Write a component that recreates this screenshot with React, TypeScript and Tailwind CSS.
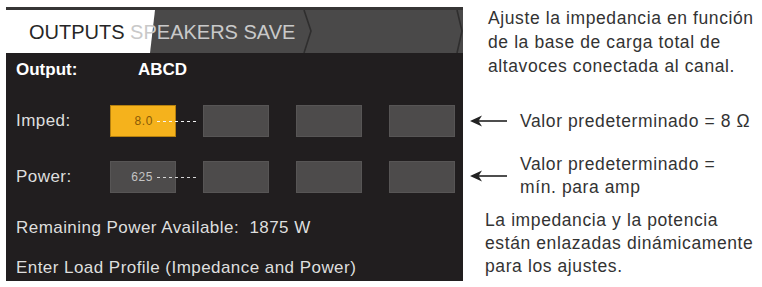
import React from "react";

function Arrow() {
  return (
    <svg width="38" height="14" viewBox="0 0 38 14" className="shrink-0">
      <line x1="6" y1="7" x2="37" y2="7" stroke="#222" strokeWidth="1.6" />
      <path d="M0 7 L12 1.5 L8.5 7 L12 12.5 Z" fill="#222" />
    </svg>
  );
}

function Box({ value, active }: { value?: string; active?: boolean }) {
  return (
    <div
      className={
        active
          ? "relative w-[66px] h-[32px] bg-[#f5b21c] border border-[#b5800f] flex items-center justify-end pr-[22px]"
          : "relative w-[66px] h-[32px] bg-[#4d4b4b] border border-[#575555] flex items-center justify-end pr-[22px]"
      }
    >
      {value && (
        <>
          <span
            className={
              active
                ? "text-[12px] tracking-[0.6px] text-[#8a5a06] leading-none"
                : "text-[12px] tracking-[0.6px] text-[#c4c4c4] leading-none"
            }
          >
            {value}
          </span>
          <span
            className={
              active
                ? "absolute left-[46px] top-[15px] w-[41px] h-px bg-[repeating-linear-gradient(90deg,#f4f4f4_0px,#f4f4f4_3px,transparent_3px,transparent_6px)]"
                : "absolute left-[46px] top-[15px] w-[42px] h-px bg-[repeating-linear-gradient(90deg,#d6d6d6_0px,#d6d6d6_3px,transparent_3px,transparent_6px)]"
            }
          />
        </>
      )}
    </div>
  );
}

export default function App() {
  return (
    <div className="w-[762px] h-[287px] bg-white flex overflow-hidden font-['Liberation_Sans',Arial,sans-serif]">
      <div className="ml-[6px] mt-[7px] w-[457px] h-[274px] flex flex-col shrink-0">
        <div className="relative h-[46px] bg-[#4a4949] border-t-[3px] border-[#363535] flex items-center overflow-hidden">
          <div className="absolute left-0 top-0 h-full w-[150px] bg-white [clip-path:polygon(0_0,149px_0,144px_100%,0_100%)]" />
          <svg className="absolute left-0 top-0" width="457" height="43">
            <polyline points="298,0 305,21 298,43" fill="none" stroke="#2f2e2e" strokeWidth="1.6" />
            <polyline points="451,0 456,21 451,43" fill="none" stroke="#2f2e2e" strokeWidth="1.6" />
          </svg>
          <div className="relative pl-[23px] text-[20px] leading-none whitespace-nowrap">
            <span className="text-[#262626]">OUTPUTS</span>
            <span className="text-[#c9c9c9]"> SPEAKERS SAVE</span>
          </div>
        </div>
        <div className="flex-1 bg-[#211e1f] pl-[10px] flex flex-col text-[17px] tracking-[0.45px] text-[#dedede]">
          <div className="h-[34px] flex items-center font-bold text-white tracking-normal">
            <span className="w-[122px]">Output:</span>
            <span>ABCD</span>
          </div>
          <div className="mt-[18px] h-[32px] flex items-center">
            <span className="w-[94px]">Imped:</span>
            <div className="flex gap-[27px]">
              <Box value="8.0" active />
              <Box />
              <Box />
              <Box />
            </div>
          </div>
          <div className="mt-[24px] h-[32px] flex items-center">
            <span className="w-[94px]">Power:</span>
            <div className="flex gap-[27px]">
              <Box value="625" />
              <Box />
              <Box />
              <Box />
            </div>
          </div>
          <div className="mt-[23px] h-[24px] flex items-center whitespace-pre">
            Remaining Power Available:  1875 W
          </div>
          <div className="mt-[16px] h-[24px] flex items-center whitespace-nowrap">
            Enter Load Profile (Impedance and Power)
          </div>
        </div>
      </div>
      <div className="ml-[7px] flex-1 flex flex-col text-[17.5px] tracking-[0.6px] text-[#333333] leading-[24px] whitespace-nowrap">
        <div className="mt-[6px] pl-[18px]">
          <div>Ajuste la impedancia en función</div>
          <div>de la base de carga total de</div>
          <div>altavoces conectada al canal.</div>
        </div>
        <div className="mt-[31px] h-[24px] flex items-center gap-[12px]">
          <Arrow />
          <span>Valor predeterminado = 8 Ω</span>
        </div>
        <div className="mt-[20px] flex items-center gap-[12px] leading-[23px]">
          <Arrow />
          <div>
            <div>Valor predeterminado =</div>
            <div>mín. para amp</div>
          </div>
        </div>
        <div className="pl-[15px] leading-[23px] mt-[10px]">
          <div>La impedancia y la potencia</div>
          <div>están enlazadas dinámicamente</div>
          <div>para los ajustes.</div>
        </div>
      </div>
    </div>
  );
}
